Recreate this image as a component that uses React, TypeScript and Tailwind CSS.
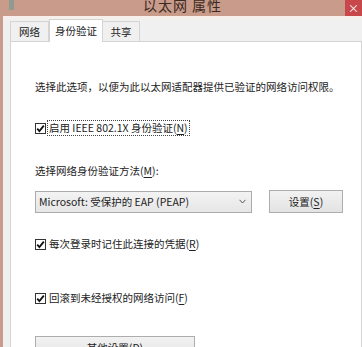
import React from 'react'

const font = { fontFamily: '"Noto Sans CJK SC", "Noto Sans", sans-serif' }

function Key({ k }: { k: string }) {
  return (
    <>
      (<span className="underline underline-offset-2">{k}</span>)
    </>
  )
}

function Check({ children, focus }: { children: React.ReactNode; focus?: boolean }) {
  return (
    <div className="flex items-center h-[16px]">
      <div className="w-[11px] h-[11px] border border-[#333] bg-white flex items-center justify-center shrink-0">
        <svg width="9" height="9" viewBox="0 0 9 9">
          <path d="M1.2 4.6 L3.4 7 L7.8 1.6" fill="none" stroke="#111" strokeWidth="1.8" />
        </svg>
      </div>
      <div
        className={
          'ml-[1px] px-[1px] leading-[14px] ' +
          (focus ? 'border border-dotted border-[#444]' : 'border border-transparent')
        }
      >
        {children}
      </div>
    </div>
  )
}

export default function App() {
  return (
    <div className="w-[362px] h-[347px] overflow-hidden bg-[#c89b8a] flex flex-col text-[#222]" style={font}>
      {/* title bar */}
      <div className="h-[16px] flex items-start shrink-0 relative">
        <div className="ml-[9px] w-[5px] h-[10px] bg-[#8f9a92] rounded-b-[1px]" />
        <div className="flex-1 flex justify-center pl-[6px]">
          <span className="text-[14px] leading-[14px] -mt-[2px] text-[#3b2a22] tracking-[1px]">以太网 属性</span>
        </div>
        <div className="w-[17px] h-[16px] bg-[#c8474b] flex items-center justify-center text-white text-[11px] leading-none">
          ×
        </div>
      </div>
      <div className="flex flex-1 min-h-0">
        <div className="w-[3px] bg-[#c89b8a]" />
        <div className="flex-1 flex flex-col bg-[#f0f0f0] border-t-[3px] border-[#f7efec] pl-[7px]">
          {/* tabs */}
          <div className="flex items-end h-[28px] text-[10.5px] leading-[14px]">
            <div className="w-[39px] h-[20px] border border-b-0 border-[#d4d4d4] bg-[#f0f0f0] flex items-center justify-center">
              网络
            </div>
            <div className="w-[54px] h-[23px] border border-b-0 border-[#d4d4d4] bg-white flex items-center justify-center -mb-[1px] relative z-10">
              身份验证
            </div>
            <div className="w-[37px] h-[20px] border border-b-0 border-l-0 border-[#d4d4d4] bg-[#f0f0f0] flex items-center justify-center">
              共享
            </div>
          </div>
          {/* panel */}
          <div className="flex-1 bg-white border border-[#d4d4d4] border-b-0 pl-[24px] pt-[38px] text-[10.5px]">
            <div className="leading-[14px]">选择此选项，以便为此以太网适配器提供已验证的网络访问权限。</div>
            <div className="mt-[26px]">
              <Check focus>
                启用 IEEE 802.1X 身份验证<Key k="N" />
              </Check>
            </div>
            <div className="mt-[28px] leading-[14px]">
              选择网络身份验证方法<Key k="M" />:
            </div>
            <div className="mt-[12px] flex items-center">
              <div className="w-[217px] h-[22px] border border-[#acacac] bg-gradient-to-b from-[#f3f3f3] to-[#e6e6e6] flex items-center pl-[3px] pr-[5px]">
                <span className="flex-1 leading-[14px]">Microsoft: 受保护的 EAP (PEAP)</span>
                <svg width="7" height="5" viewBox="0 0 7 5">
                  <path d="M0.5 0.8 L3.5 4 L6.5 0.8" fill="none" stroke="#555" strokeWidth="1" />
                </svg>
              </div>
              <div className="ml-[17px] w-[74px] h-[23px] border border-[#adadad] bg-gradient-to-b from-[#f2f2f2] to-[#e3e3e3] flex items-center justify-center leading-[14px]">
                设置<Key k="S" />
              </div>
            </div>
            <div className="mt-[23px]">
              <Check>
                每次登录时记住此连接的凭据<Key k="R" />
              </Check>
            </div>
            <div className="mt-[38px]">
              <Check>
                回滚到未经授权的网络访问<Key k="F" />
              </Check>
            </div>
            <div className="mt-[30px] w-[160px] h-[23px] border border-[#adadad] bg-gradient-to-b from-[#f2f2f2] to-[#e3e3e3] flex items-center justify-center leading-[14px]">
              其他设置<Key k="D" />
            </div>
          </div>
        </div>
      </div>
    </div>
  )
}
